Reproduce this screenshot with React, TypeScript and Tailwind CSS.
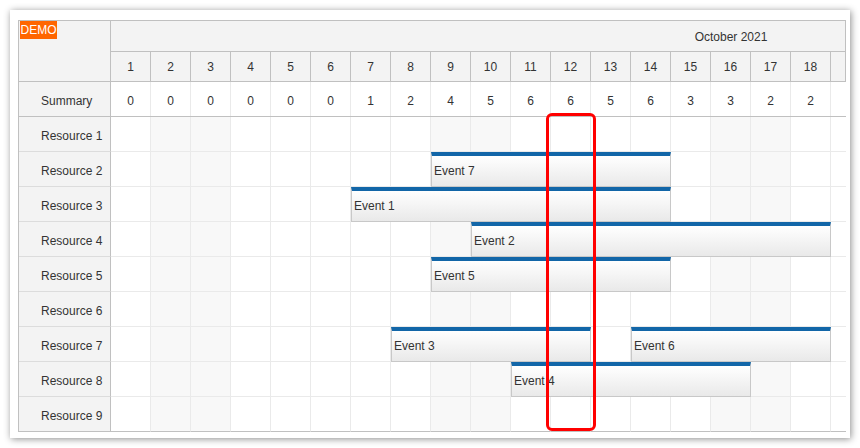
import React from 'react';

const DAYS = Array.from({ length: 31 }, (_, i) => i + 1);
const VISIBLE = 18; // days whose labels fit in the viewport
const WEEKEND = new Set([2, 3, 9, 10, 16, 17, 23, 24, 30, 31]);
const SUMMARY = [0, 0, 0, 0, 0, 0, 1, 2, 4, 5, 6, 6, 5, 6, 3, 3, 2, 2];
const RESOURCES = Array.from({ length: 9 }, (_, i) => `Resource ${i + 1}`);
const CELL = 40;

// row index is 1-based, start is the day of month, days is the length
const EVENTS = [
  { row: 2, start: 9, days: 6, text: 'Event 7' },
  { row: 3, start: 7, days: 8, text: 'Event 1' },
  { row: 4, start: 10, days: 9, text: 'Event 2' },
  { row: 5, start: 9, days: 6, text: 'Event 5' },
  { row: 7, start: 8, days: 5, text: 'Event 3' },
  { row: 7, start: 14, days: 5, text: 'Event 6' },
  { row: 8, start: 11, days: 6, text: 'Event 4' },
];

export default function App() {
  return (
    <div className="min-h-screen bg-white font-['Liberation_Sans',Arial,sans-serif] text-xs text-[#333]">
      <div className="relative ml-[10px] mt-[10px] h-[428px] w-[840px] bg-white pl-2 pt-[10px] shadow-[1px_1px_7px_rgba(0,0,0,0.45)]">
        <div className="w-[828px] border-l border-t border-[#c0c0c0]">
          {/* HEADER */}
          <div className="flex">
            <div className="h-[61px] w-[92px] shrink-0 border-b border-r border-[#c0c0c0] bg-[#f3f3f3]">
              <span className="ml-px inline-block h-[18px] w-[37px] bg-[#ff6600] text-center leading-[18px] text-white">DEMO</span>
            </div>
            <div className="w-[735px] overflow-hidden border-r border-[#c0c0c0] bg-[#f3f3f3]">
              <div className="w-[1240px]">
                <div className="flex h-[31px] items-center justify-center border-b border-[#c0c0c0] pt-px">October 2021</div>
                <div className="flex h-[30px] border-b border-[#c0c0c0]">
                  {DAYS.map((d) => (
                    <div key={d} className="flex w-[40px] shrink-0 items-center justify-center border-r border-[#c0c0c0] pt-px">
                      {d <= VISIBLE ? d : ''}
                    </div>
                  ))}
                </div>
              </div>
            </div>
          </div>

          {/* SUMMARY */}
          <div className="flex">
            <div className="flex h-[35px] w-[92px] shrink-0 items-center border-b border-r border-[#c0c0c0] bg-[#f3f3f3] pl-[22px] pt-[3px]">
              Summary
            </div>
            <div className="w-[735px] overflow-hidden">
              <div className="flex h-[35px] w-[1240px] border-b border-[#c0c0c0]">
                {DAYS.map((d) => (
                  <div key={d} className="flex w-[40px] shrink-0 items-center justify-center border-r border-[#eaeaea] pt-[3px]">
                    {d <= VISIBLE ? SUMMARY[d - 1] : ''}
                  </div>
                ))}
              </div>
            </div>
          </div>

          {/* RESOURCES */}
          {RESOURCES.map((name, r) => {
            const last = r === RESOURCES.length - 1;
            return (
              <div key={name} className="flex">
                <div
                  className={`flex h-[35px] w-[92px] shrink-0 items-center border-b border-r bg-[#f3f3f3] pl-[22px] pt-[3px] ${
                    last ? 'border-b-[#c0c0c0] border-r-[#c0c0c0]' : 'border-b-[#dcdcdc] border-r-[#c0c0c0]'
                  }`}
                >
                  {name}
                </div>
                <div className="relative h-[35px] w-[735px] overflow-hidden">
                  <div className="flex h-[35px] w-[1240px]">
                    {DAYS.map((d) => (
                      <div
                        key={d}
                        className={`w-[40px] shrink-0 border-b border-r border-r-[#eaeaea] ${
                          last ? 'border-b-[#c0c0c0]' : 'border-b-[#eaeaea]'
                        } ${WEEKEND.has(d) ? 'bg-[#f8f8f8]' : 'bg-white'}`}
                      />
                    ))}
                  </div>
                  {EVENTS.filter((e) => e.row === r + 1).map((e) => (
                    <div
                      key={e.text}
                      className="absolute top-0 h-[35px] overflow-hidden whitespace-nowrap border-x border-b border-t-4 border-[#c8c8c8] border-t-[#1266a8] bg-linear-to-b from-white to-[#e9e9e9] pl-[2px] leading-[30px]"
                      style={{ left: (e.start - 1) * CELL, width: e.days * CELL }}
                    >
                      {e.text}
                    </div>
                  ))}
                </div>
              </div>
            );
          })}
        </div>

        {/* highlight box */}
        <div className="pointer-events-none absolute left-[536px] top-[103px] z-10 h-[318px] w-[50px] rounded-[6px] border-[3px] border-[#ff0000]" />
      </div>
    </div>
  );
}
